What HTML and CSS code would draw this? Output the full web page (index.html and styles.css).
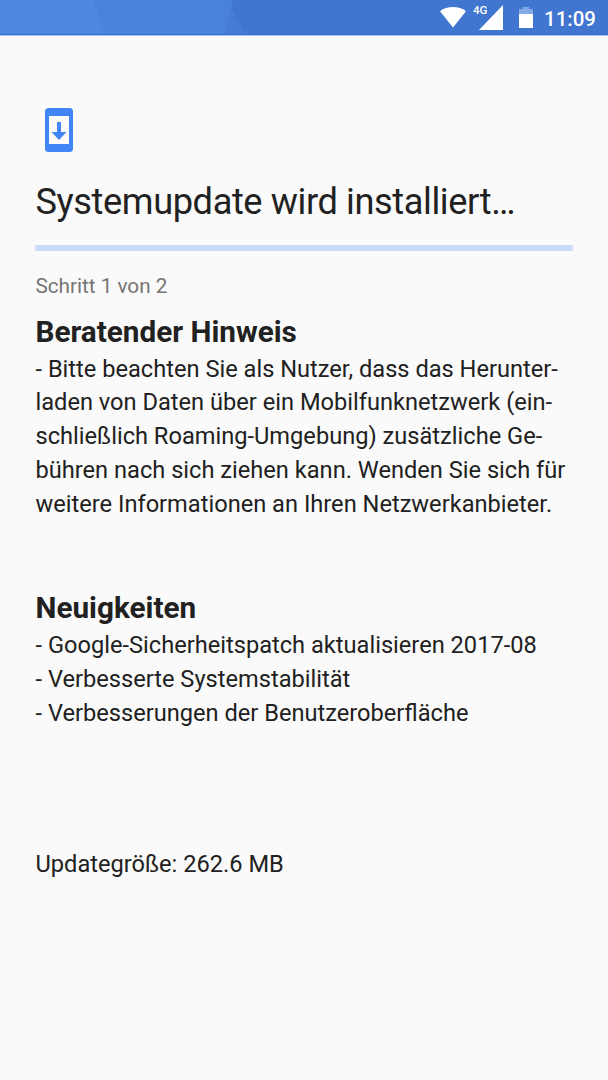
FILE: index.html
```
<!DOCTYPE html>
<html lang="de">

<head>
    <meta charset="UTF-8">
    <meta name="viewport" content="width=device-width, initial-scale=1.0">
    <title>Systemupdate</title>
    <link rel="stylesheet" href="styles.css">
</head>

<body>

    <!-- Statusleiste -->
    <header class="statusbar">
        <svg class="statusbar-bg" viewBox="0 0 608 36" preserveAspectRatio="none">
            <rect width="608" height="36" fill="#4075d0"/>
            <path d="M0 0H233L224 36H0z" fill="#4a81db"/>
            <path d="M231 8L247 36H224z" fill="#467cd5"/>
            <path d="M0 0H93L106 36H0z" fill="#4f87e0"/>
            <rect y="34" width="608" height="1" fill="#3670d6"/>
            <rect y="35" width="608" height="1" fill="#a9c4ee"/>
        </svg>
        <svg class="icon-wifi" width="26" height="21" viewBox="0 0 26 21">
            <path d="M13 20.5L0 4.2C3.6 1.4 8 0 13 0s9.400 1.400 13 4.200z" fill="#fff"/>
        </svg>
        <span class="network">4G</span>
        <svg class="icon-signal" width="24" height="25" viewBox="0 0 24 25">
            <path d="M24 0V25H0z" fill="#fff"/>
        </svg>
        <svg class="icon-battery" width="14" height="21" viewBox="0 0 14 21">
            <path d="M4 0h6v2h4v5H0V2h4z" fill="#83a9e6"/>
            <path d="M0 7h14v14H0z" fill="#fff"/>
        </svg>
        <span class="clock">11:09</span>
    </header>

    <main class="content">
        <svg class="icon-update" width="28" height="44" viewBox="0 0 28 44">
            <path d="M3.500 0h21A3.500 3.500 0 0 1 28 3.500v37a3.500 3.500 0 0 1-3.500 3.500h-21A3.500 3.500 0 0 1 0 40.500v-37A3.500 3.500 0 0 1 3.500 0z" fill="#4285f4"/>
            <path d="M4 8h20v28H4z" fill="#fafafa"/>
            <path d="M12 14h4v10h5.500L14 32l-7.500-8H12z" fill="#4285f4"/>
        </svg>

        <h1 class="title">Systemupdate wird installiert…</h1>
        <div class="progress"></div>
        <p class="step">Schritt 1 von 2</p>

        <section class="notice">
            <h2>Beratender Hinweis</h2>
            <p>
                - Bitte beachten Sie als Nutzer, dass das Herunter-<br>
                laden von Daten über ein Mobilfunknetzwerk (ein-<br>
                schließlich Roaming-Umgebung) zusätzliche Ge-<br>
                bühren nach sich ziehen kann. Wenden Sie sich für<br>
                weitere Informationen an Ihren Netzwerkanbieter.
            </p>
        </section>

        <section class="news">
            <h2>Neuigkeiten</h2>
            <p>- Google-Sicherheitspatch aktualisieren 2017-08</p>
            <p>- Verbesserte Systemstabilität</p>
            <p>- Verbesserungen der Benutzeroberfläche</p>
        </section>

        <p class="size">Updategröße: 262.6 MB</p>
    </main>

</body>
</html>
```
FILE: styles.css
```
* {
    box-sizing: border-box;
    margin: 0;
    padding: 0;
}

body {
    height: 100vh;
    overflow: hidden;
    background: #fafafa;
    color: #212121;
    font-family: Roboto, sans-serif;
    font-size: 23.64px;
    line-height: 33.75px;
    white-space: nowrap;
}

/* Statusleiste */
.statusbar {
    position: relative;
    display: flex;
    align-items: flex-start;
    justify-content: flex-end;
    height: 36px;
    padding-right: 12px;
    color: #fff;
}

/* Hintergrund der Leiste */
.statusbar-bg {
    position: absolute;
    top: 0;
    left: 0;
    width: 100%;
    height: 36px;
    z-index: -1;
}

.icon-wifi {
    margin-top: 7px;
}

.network {
    width: 15px;
    margin: 4px -9px 0 7px;
    font-size: 11.5px;
    font-weight: 500;
    line-height: 13px;
}

.icon-signal {
    margin-top: 5px;
}

.icon-battery {
    margin: 7px 11px 0 16px;
}

.clock {
    font-size: 20.5px;
    font-weight: 500;
    line-height: 38px;
}

/* Inhalt */
.content {
    display: flex;
    flex-direction: column;
    padding: 72px 35px 0 35.5px;
}

.icon-update {
    margin-left: 9.5px;
}

.title {
    margin-top: 26px;
    font-size: 36.2px;
    font-weight: 400;
    letter-spacing: -0.4px;
    line-height: 48px;
}

.progress {
    height: 6px;
    margin: 19px 0 0 -0.5px;
    background: #c9dbf8;
}

.step {
    margin-top: 21px;
    color: #757575;
    font-size: 20.7px;
    line-height: 28px;
}

h2 {
    margin-bottom: 2px;
    font-size: 29.7px;
    font-weight: 700;
    line-height: 38px;
}

.notice {
    margin-top: 12.5px;
}

.news {
    margin-top: 68px;
}

.size {
    margin-top: 117px;
}
```
